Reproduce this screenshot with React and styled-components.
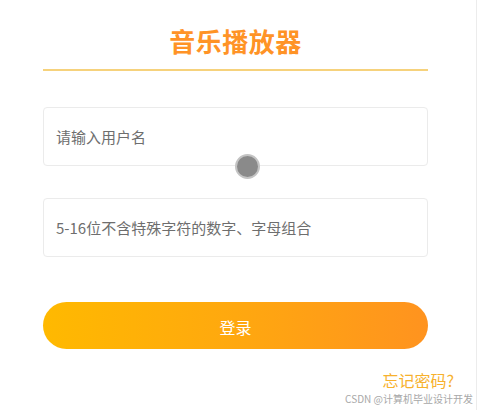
import React from "react";
import styled, { createGlobalStyle } from "styled-components";

const GlobalStyle = createGlobalStyle`
  html, body { margin: 0; padding: 0; background: #fff; }
  body { font-family: "Noto Sans CJK SC", "Noto Sans", sans-serif; }
  * { box-sizing: border-box; }
`;

const Page = styled.div`
  position: relative;
  width: 477px;
  height: 410px;
  border-right: 1px solid #ececec;
  overflow: hidden;
`;

const Form = styled.div`
  display: flex;
  flex-direction: column;
  width: 385px;
  margin-left: 43px;
`;

const Title = styled.h1`
  margin: 0;
  padding-top: 23px;
  padding-bottom: 10px;
  line-height: 36px;
  font-size: 26px;
  font-weight: 700;
  letter-spacing: 0.5px;
  text-align: center;
  color: #ff9326;
  border-bottom: 2px solid #f6d27c;
`;

const Field = styled.input`
  display: block;
  width: 100%;
  height: 59px;
  margin-top: ${(p) => p.$gap}px;
  padding: 0 12px;
  border: 1px solid #ebebeb;
  border-radius: 4px;
  outline: none;
  font-family: "Noto Sans CJK SC", sans-serif;
  font-size: 15px;
  color: #333;
  background: #fff;
  &::placeholder { color: #6e6e6e; }
`;

const LoginButton = styled.button`
  display: flex;
  align-items: center;
  justify-content: center;
  width: 100%;
  height: 47px;
  margin-top: 45px;
  border: none;
  border-radius: 24px;
  background: linear-gradient(90deg, #ffb900 0%, #ffa80f 50%, #ff931f 100%);
  color: #fff;
  font-family: "Noto Sans CJK SC", sans-serif;
  font-size: 16px;
  padding: 0;
  padding-top: 2px;
`;

const Footer = styled.div`
  display: flex;
  justify-content: flex-end;
  padding-right: 22px;
  margin-top: 21px;
`;

const Forgot = styled.a`
  font-size: 16px;
  line-height: 20px;
  color: #f7b12d;
  text-decoration: none;
`;

const Watermark = styled.div`
  position: absolute;
  right: 3px;
  top: 392px;
  font-size: 10px;
  line-height: 13px;
  color: #a8a8a8;
  white-space: nowrap;
`;

const TouchDot = styled.div`
  position: absolute;
  left: 235px;
  top: 154px;
  width: 25px;
  height: 25px;
  border-radius: 50%;
  background: #8a8a8a;
  border: 2px solid #c4c4c4;
`;

export default function App() {
  return (
    <>
      <GlobalStyle />
      <Page>
        <Form>
          <Title>音乐播放器</Title>
          <Field $gap={36} placeholder="请输入用户名" />
          <Field $gap={32} type="password" placeholder="5-16位不含特殊字符的数字、字母组合" />
          <LoginButton>登录</LoginButton>
        </Form>
        <Footer>
          <Forgot href="#">忘记密码?</Forgot>
        </Footer>
        <TouchDot />
        <Watermark>CSDN @计算机毕业设计开发</Watermark>
      </Page>
    </>
  );
}
